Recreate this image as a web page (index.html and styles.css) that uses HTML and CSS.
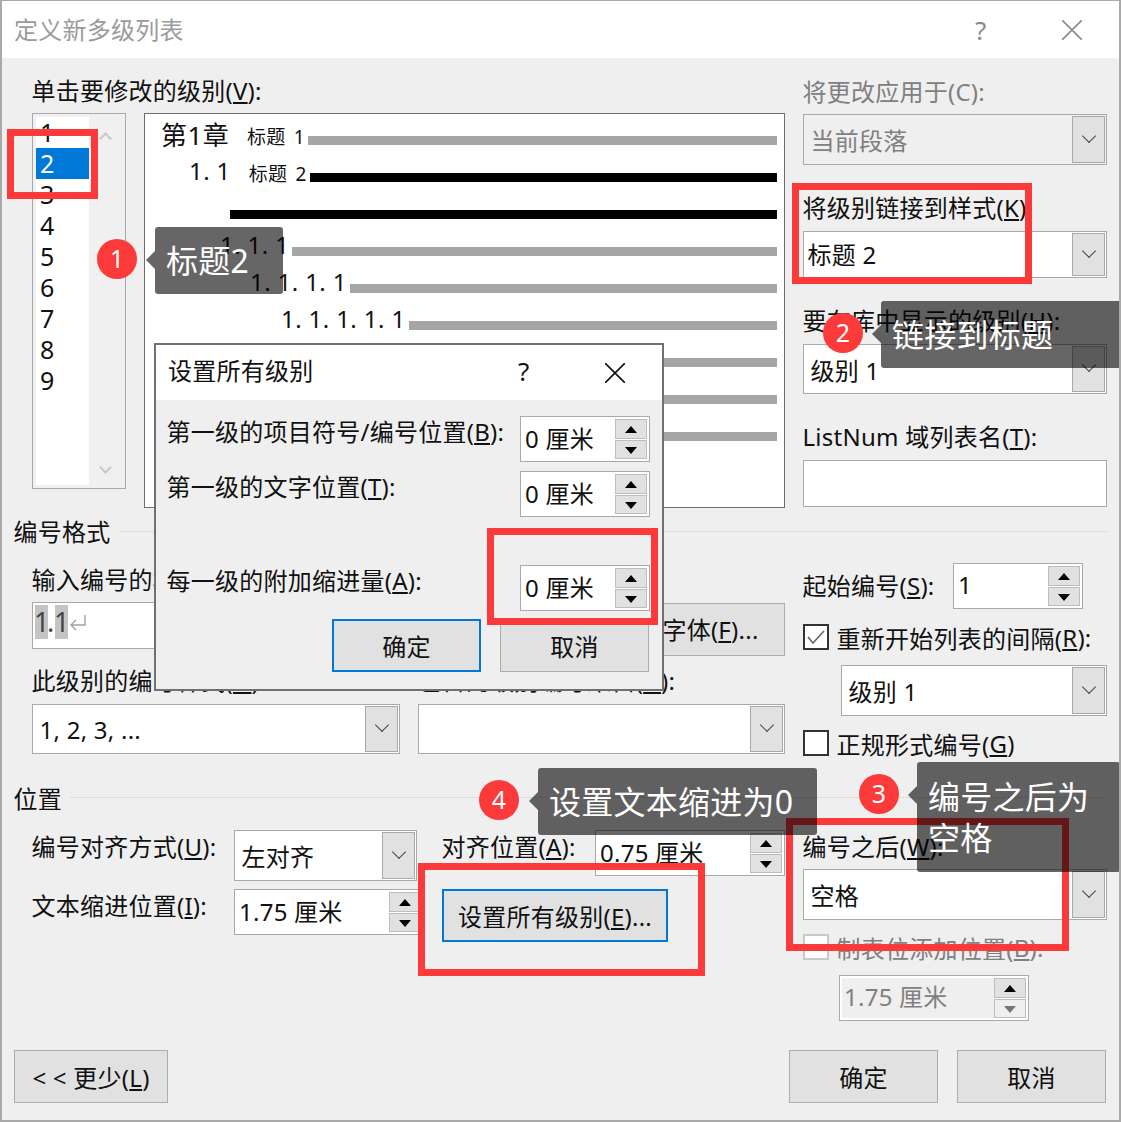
FILE: index.html
```html
<!DOCTYPE html>
<html lang="zh-CN">
<head>
    <meta charset="UTF-8">
    <title>定义新多级列表</title>
    <link rel="stylesheet" href="styles.css">
</head>
<body>
    <div class="dialog">
        <div class="titlebar">
            <span class="title">定义新多级列表</span>
            <span class="help">?</span>
            <svg class="close" width="20" height="20" viewBox="0 0 20 20"><path d="M0 0L20 20M20 0L0 20" stroke="#8a8a8a" stroke-width="1.6" fill="none"/></svg>
        </div>

        <div class="content">
            <!-- top part: levels, preview, link options -->
            <div class="top">
                <div class="top-left">
                    <div class="label">单击要修改的级别(<u>V</u>):</div>
                    <div class="top-boxes">
                        <div class="listbox">
                            <div class="items">
                                <div class="item">1</div>
                                <div class="item selected">2</div>
                                <div class="item">3</div>
                                <div class="item">4</div>
                                <div class="item">5</div>
                                <div class="item">6</div>
                                <div class="item">7</div>
                                <div class="item">8</div>
                                <div class="item">9</div>
                            </div>
                            <div class="scroll">
                                <span class="chev chev-up"></span>
                                <span class="chev chev-down"></span>
                            </div>
                        </div>
                        <div class="preview">
                            <div class="prow"><span class="pnum big">第1章</span><span class="pstyle">标题 1</span><span class="bar"></span></div>
                            <div class="prow lv2"><span class="pnum">1. 1</span><span class="pstyle">标题 2</span><span class="bar dark"></span></div>
                            <div class="prow lv3"><span class="bar dark"></span></div>
                            <div class="prow lv4"><span class="pnum">1. 1. 1</span><span class="bar"></span></div>
                            <div class="prow lv5"><span class="pnum">1. 1. 1. 1</span><span class="bar"></span></div>
                            <div class="prow lv6"><span class="pnum">1. 1. 1. 1. 1</span><span class="bar"></span></div>
                            <div class="prow lv7"><span class="bar"></span></div>
                            <div class="prow lv7"><span class="bar"></span></div>
                            <div class="prow lv7"><span class="bar"></span></div>
                        </div>
                    </div>
                </div>
                <div class="side">
                    <div class="label off">将更改应用于(C):</div>
                    <div class="select h51 disabled"><span class="val">当前段落</span><span class="drop"></span></div>
                    <div class="label gap">将级别链接到样式(<u>K</u>):</div>
                    <div class="select"><span class="val tight">标题 2</span><span class="drop"></span></div>
                    <div class="label gap">要在库中显示的级别(<u>H</u>):</div>
                    <div class="select h50"><span class="val">级别 1</span><span class="drop"></span></div>
                    <div class="label gap">ListNum 域列表名(<u>T</u>):</div>
                    <div class="input"></div>
                </div>
            </div>

            <div class="group-head head-format"><span>编号格式</span></div>

            <!-- number format -->
            <div class="format">
                <div class="format-left">
                    <div class="label">输入编号的格式(<u>O</u>):</div>
                    <div class="format-row">
                        <div class="input fmt-input">
                            <span class="shade">1</span><span class="dot">.</span><span class="shade">1</span>
                            <svg class="para" width="18" height="18" viewBox="0 0 18 18"><path d="M16 2V12H2M7 7L2 12L7 17" stroke="#a0a0a0" stroke-width="1.4" fill="none"/></svg>
                        </div>
                        <button class="btn">字体(<u>F</u>)...</button>
                    </div>
                    <div class="two">
                        <div class="label">此级别的编号样式(<u>N</u>):</div>
                        <div class="label">包含的级别编号来自(<u>D</u>):</div>
                        <div class="select h50"><span class="val">1, 2, 3, ...</span><span class="drop"></span></div>
                        <div class="select h50"><span class="val"></span><span class="drop"></span></div>
                    </div>
                </div>
                <div class="side">
                    <div class="start-row">
                        <span class="label">起始编号(<u>S</u>):</span>
                        <div class="spin w130"><span class="val">1</span><span class="spin-btns"><i class="up"></i><i class="down"></i></span></div>
                    </div>
                    <div class="check-row mt15"><span class="check on"><svg width="20" height="18" viewBox="0 0 20 18"><path d="M2 9L7 15L18 3" stroke="#666" stroke-width="1.6" fill="none"/></svg></span>重新开始列表的间隔(<u>R</u>):</div>
                    <div class="select h51 indent mt15"><span class="val">级别 1</span><span class="drop"></span></div>
                    <div class="check-row mt14"><span class="check"></span>正规形式编号(<u>G</u>)</div>
                </div>
            </div>

            <div class="group-head head-place"><span>位置</span></div>

            <!-- position -->
            <div class="place">
                <div class="place-left">
                    <div class="place-row">
                        <span class="label tall w202">编号对齐方式(<u>U</u>):</span>
                        <div class="select h51 w183"><span class="val">左对齐</span><span class="drop"></span></div>
                        <span class="label tall w153 ml25">对齐位置(<u>A</u>):</span>
                        <div class="spin w190"><span class="val">0.75 厘米</span><span class="spin-btns"><i class="up"></i><i class="down"></i></span></div>
                    </div>
                    <div class="place-row mt8">
                        <span class="label tall w202">文本缩进位置(<u>I</u>):</span>
                        <div class="spin w190"><span class="val">1.75 厘米</span><span class="spin-btns"><i class="up"></i><i class="down"></i></span></div>
                        <button class="btn focus all-btn">设置所有级别(<u>E</u>)...</button>
                    </div>
                </div>
                <div class="side side-place">
                    <div class="label">编号之后(<u>W</u>):</div>
                    <div class="select h51"><span class="val">空格</span><span class="drop"></span></div>
                    <div class="check-row mt14 off"><span class="check faint"></span>制表位添加位置(<u>B</u>):</div>
                    <div class="spin w190 indent34 mt15 spin-off"><span class="val">1.75 厘米</span><span class="spin-btns"><i class="up"></i><i class="down faint"></i></span></div>
                </div>
            </div>

            <div class="footer">
                <button class="btn less">&lt; &lt; 更少(<u>L</u>)</button>
                <div class="footer-right">
                    <button class="btn">确定</button>
                    <button class="btn">取消</button>
                </div>
            </div>
        </div>

        <!-- the small dialog on top -->
        <div class="subdialog">
            <div class="titlebar sub-title">
                <span class="title dark-title">设置所有级别</span>
                <span class="help sub-help">?</span>
                <svg class="close sub-close" width="20" height="20" viewBox="0 0 20 20"><path d="M0 0L20 20M20 0L0 20" stroke="#111" stroke-width="1.6" fill="none"/></svg>
            </div>
            <div class="sub-body">
                <div class="sub-row">
                    <span class="label">第一级的项目符号/编号位置(<u>B</u>):</span>
                    <div class="spin w130"><span class="val">0 厘米</span><span class="spin-btns"><i class="up"></i><i class="down"></i></span></div>
                </div>
                <div class="sub-row mt9">
                    <span class="label">第一级的文字位置(<u>T</u>):</span>
                    <div class="spin w130"><span class="val">0 厘米</span><span class="spin-btns"><i class="up"></i><i class="down"></i></span></div>
                </div>
                <div class="sub-row mt48">
                    <span class="label">每一级的附加缩进量(<u>A</u>):</span>
                    <div class="spin w130"><span class="val">0 厘米</span><span class="spin-btns"><i class="up"></i><i class="down"></i></span></div>
                </div>
                <div class="sub-buttons">
                    <button class="btn focus">确定</button>
                    <button class="btn">取消</button>
                </div>
            </div>
        </div>

        <!-- red boxes and notes over the screenshot -->
        <div class="redbox red-1"></div>
        <div class="redbox red-2"></div>
        <div class="redbox red-3"></div>
        <div class="redbox red-4"></div>
        <div class="redbox red-5"></div>

        <div class="marker mark-1">1</div>
        <div class="tip tip-1">标题2</div>
        <div class="marker mark-2">2</div>
        <div class="tip tip-2">链接到标题</div>
        <div class="marker mark-3">3</div>
        <div class="tip tip-3">编号之后为<br>空格</div>
        <div class="marker mark-4">4</div>
        <div class="tip tip-4">设置文本缩进为0</div>
    </div>
</body>
</html>
```

FILE: styles.css
```css
* {
    box-sizing: border-box;
}
body {
    margin: 0;
    font-family: "Noto Sans", "Noto Sans CJK SC", sans-serif;
    font-size: 24px;
    letter-spacing: 0.25px;
    color: #111;
}
u {
    text-underline-offset: 2px;
}
.dialog {
    position: relative;
    width: 1121px;
    height: 1122px;
    overflow: hidden;
    background: #efefef;
    border: 2px solid #a9a9a9;
    border-top-width: 1px;
}
.titlebar {
    display: flex;
    align-items: center;
    height: 57px;
    padding-left: 12px;
    background: #fff;
}
.title {
    flex: 1;
    color: #9b9b9b;
    line-height: 32px;
}
.help {
    width: 40px;
    color: #8a8a8a;
    font-size: 26px;
}
.close {
    margin-right: 37px;
    margin-left: 47px;
}
.content {
    padding: 0 12px;
}
.label {
    display: block;
    height: 32px;
    line-height: 32px;
    text-indent: -0.5px;
    white-space: nowrap;
}
.label.off, .check-row.off {
    color: #808080;
}
.gap {
    margin-top: 27px;
    margin-bottom: 7px;
}

/* top part */
.top {
    display: flex;
    justify-content: space-between;
    padding-left: 18px;
    height: 450px;
}
.top-left {
    width: 753px;
    padding-top: 17px;
}
.top-boxes {
    display: flex;
    gap: 18px;
    margin-top: 6px;
}
.side {
    width: 304px;
}
.top .side {
    padding-top: 18px;
}
.top .side > .label:first-child {
    margin-bottom: 6px;
}
.listbox {
    display: flex;
    width: 94px;
    height: 376px;
    padding: 3px;
    background: #f0f0f0;
    border: 1px solid #a9a9a9;
}
.items {
    width: 53px;
    background: #fff;
}
.item {
    height: 31px;
    padding-left: 4px;
    line-height: 31px;
    font-size: 25px;
}
.item.selected {
    background: #0078d7;
    color: #fff;
}
.scroll {
    display: flex;
    flex: 1;
    flex-direction: column;
    align-items: center;
    justify-content: space-between;
    padding: 17px 0 13px;
}
.chev {
    width: 9px;
    height: 9px;
    border: solid #c8c8c8;
    border-width: 2px 0 0 2px;
    transform: rotate(45deg);
}
.chev-down {
    transform: rotate(225deg);
}
.preview {
    width: 641px;
    height: 395px;
    padding: 8px 7px 0 16px;
    background: #fff;
    border: 1px solid #6e6e6e;
}
.prow {
    display: flex;
    align-items: center;
    height: 37px;
}
.lv2 { padding-left: 28px; }
.lv3 { padding-left: 66px; }
.lv4 { padding-left: 59px; }
.lv5 { padding-left: 89px; }
.lv6 { padding-left: 120px; }
.lv7 { padding-left: 181px; }
.pnum {
    margin-top: -14px;
    letter-spacing: 0.4px;
    white-space: nowrap;
}
.pnum.big {
    font-size: 26px;
}
.pstyle {
    margin-top: -10px;
    margin-left: 18px;
    font-size: 19px;
    word-spacing: 3px;
    white-space: nowrap;
}
.bar {
    flex: 1;
    height: 9px;
    margin-left: 3px;
    background: #a6a6a6;
}
.bar.dark {
    background: #000;
}

/* form controls */
.select {
    display: flex;
    align-items: center;
    height: 47px;
    padding: 1px;
    background: #fff;
    border: 1px solid #a9a9a9;
}
.h50 { height: 50px; }
.h51 { height: 51px; }
.select .val {
    flex: 1;
    padding-left: 5.5px;
    white-space: nowrap;
}
.select .val.tight {
    margin-top: -3px;
    padding-left: 2.5px;
}
.drop {
    position: relative;
    width: 33px;
    height: 100%;
    background: #e1e1e1;
    border: 1px solid #a9a9a9;
}
.drop::after {
    content: "";
    position: absolute;
    top: calc(50% - 9px);
    left: 11px;
    width: 9px;
    height: 9px;
    border: solid #444;
    border-width: 0 1px 1px 0;
    transform: rotate(45deg);
}
.select.disabled {
    background: #efefef;
    color: #808080;
}
.input {
    height: 47px;
    background: #fff;
    border: 1px solid #a9a9a9;
}
.spin {
    display: flex;
    align-items: center;
    height: 46px;
    padding: 2px 2px 2px 0;
    background: #fff;
    border: 1px solid #a9a9a9;
}
.spin .val {
    flex: 1;
    margin-top: -4px;
    padding-left: 4px;
    white-space: nowrap;
}
.spin-btns {
    display: flex;
    flex-direction: column;
    gap: 1px;
    width: 32px;
    height: 100%;
}
.spin-btns i {
    position: relative;
    flex: 1;
    background: #e1e1e1;
    border: 1px solid #bdbdbd;
}
.spin-btns i::after {
    content: "";
    position: absolute;
    top: 6px;
    left: 9px;
    border-right: 6px solid transparent;
    border-left: 6px solid transparent;
}
.spin-btns .up::after {
    border-bottom: 7px solid #000;
}
.spin-btns .down::after {
    border-top: 7px solid #000;
}
.spin-btns .down.faint {
    background: #efefef;
}
.spin-btns .down.faint::after {
    border-top-color: #777;
}
.spin-off .val {
    margin: 0 0 0 2px;
    padding-left: 2px;
    align-self: stretch;
    line-height: 38px;
    background: #efefef;
    color: #808080;
}
.w130 { width: 130px; }
.w190 { width: 190px; }
.w183 { width: 183px; }
.w202 { width: 202px; }
.w153 { width: 153px; }
.ml25 { margin-left: 25px; }
.mt8 { margin-top: 8px; }
.mt9 { margin-top: 9px; }
.mt14 { margin-top: 14px; }
.mt15 { margin-top: 15px; }
.mt48 { margin-top: 48px; }
.indent { margin-left: 38px; }
.indent34 { margin-left: 36px; }
.btn {
    width: 149px;
    height: 53px;
    padding: 0;
    background: #e1e1e1;
    border: 1px solid #adadad;
    font: inherit;
    letter-spacing: inherit;
    color: #111;
}
.btn.focus {
    border: 2px solid #0078d7;
}
.check-row {
    display: flex;
    align-items: center;
    height: 26px;
    white-space: nowrap;
}
.check {
    display: flex;
    align-items: center;
    justify-content: center;
    width: 26px;
    height: 26px;
    margin-right: 7.5px;
    background: #fff;
    border: 2px solid #333;
}
.check.faint {
    border-color: #c8c8c8;
}

/* section headings with a rule after them */
.group-head {
    display: flex;
    align-items: flex-start;
    gap: 8px;
    height: 32px;
    line-height: 32px;
}
.group-head span {
    margin-top: -1px;
    margin-left: -0.5px;
}
.group-head::after {
    content: "";
    flex: 1;
    height: 1px;
    background: #dcdcdc;
}
.head-format {
    margin-top: 9px;
}
.head-format::after {
    margin-top: 14px;
}
.head-place {
    margin-top: 28px;
}
.head-place::after {
    margin-top: 13px;
}

/* number format */
.format {
    display: flex;
    justify-content: space-between;
    padding-left: 18px;
}
.format-left {
    width: 753px;
    padding-top: 15px;
}
.format-left > .label {
    margin-bottom: 6px;
}
.format-row {
    display: flex;
    justify-content: space-between;
    height: 53px;
}
.fmt-input {
    display: flex;
    align-items: flex-start;
    width: 585px;
    padding: 2px 0 0 2px;
    font-size: 27px;
    color: #444;
}
.shade {
    display: block;
    width: 13px;
    height: 34px;
    line-height: 34px;
    text-indent: -1px;
    background: #c4c4c4;
}
.dot {
    display: block;
    width: 7px;
    line-height: 34px;
    text-indent: -1px;
}
.para {
    margin: 8px 0 0 1px;
}
.format-row .btn {
    margin-top: 1px;
    padding-bottom: 3px;
}
.two {
    display: grid;
    grid-template-columns: 368px 367px;
    column-gap: 18px;
    margin-top: 10px;
}
.two .select {
    margin-top: 7px;
}
.format .side {
    padding-top: 14px;
}
.start-row {
    display: flex;
    align-items: center;
    justify-content: space-between;
    width: 280px;
}

/* position */
.place {
    display: flex;
    justify-content: space-between;
    padding-left: 18px;
}
.place-left {
    width: 753px;
    padding-top: 14px;
}
.place-row {
    display: flex;
    align-items: flex-start;
}
.label.tall {
    height: 34px;
    line-height: 34px;
}
.all-btn {
    width: 226px;
    margin-left: 18px;
}
.side-place {
    padding-top: 15px;
}
.side-place > .label {
    margin-bottom: 6px;
}
.footer {
    display: flex;
    justify-content: space-between;
    margin-top: 29px;
    padding-right: 1px;
}
.less {
    width: 154px;
}
.footer-right {
    display: flex;
    gap: 19px;
}

/* small dialog */
.subdialog {
    position: absolute;
    top: 342px;
    left: 152px;
    width: 510px;
    height: 348px;
    background: #efefef;
    border: 2px solid #707070;
}
.sub-title {
    height: 55px;
    padding-left: 12px;
}
.sub-title .title, .sub-title .help {
    margin-top: -3px;
}
.dark-title {
    color: #111;
}
.sub-help {
    width: 30px;
    color: #111;
}
.sub-close {
    margin-right: 37px;
    margin-left: 57px;
}
.sub-body {
    padding: 16px 12px 0 11px;
}
.sub-row {
    display: flex;
    justify-content: space-between;
}
.sub-buttons {
    display: flex;
    justify-content: flex-end;
    gap: 19px;
    margin-top: 8px;
    padding-right: 1px;
}

/* annotations */
.redbox {
    position: absolute;
    border: 7px solid #fc3a3a;
}
.red-1 { top: 128px; left: 5px; width: 91px; height: 70px; }
.red-2 { top: 182px; left: 790px; width: 240px; height: 101px; }
.red-3 { top: 527px; left: 485px; width: 171px; height: 97px; }
.red-4 { top: 862px; left: 416px; width: 287px; height: 113px; }
.red-5 { top: 817px; left: 784px; width: 283px; height: 133px; }
.marker {
    position: absolute;
    width: 40px;
    height: 40px;
    border-radius: 50%;
    background: #fc3a3a;
    color: #fff;
    text-align: center;
    line-height: 38px;
    font-size: 25px;
}
.mark-1 { top: 238px; left: 95px; }
.mark-2 { top: 312px; left: 821px; }
.mark-3 { top: 773px; left: 857px; }
.mark-4 { top: 779px; left: 477px; }
.tip {
    position: absolute;
    padding: 0 11px;
    background: rgba(0, 0, 0, 0.6);
    border-radius: 3px;
    color: #fff;
    font-size: 32px;
    line-height: 67px;
    white-space: nowrap;
}
.tip::before {
    content: "";
    position: absolute;
    top: 24px;
    left: -9px;
    border-top: 9px solid transparent;
    border-right: 9px solid rgba(0, 0, 0, 0.6);
    border-bottom: 9px solid transparent;
}
.tip-1 { top: 226px; left: 153px; width: 128px; height: 67px; }
.tip-2 { top: 300px; left: 879px; width: 240px; height: 67px; }
.tip-3 { top: 761px; left: 915px; width: 203px; height: 110px; padding-top: 14px; line-height: 41px; }
.tip-4 { top: 767px; left: 536px; width: 279px; height: 67px; }
```
